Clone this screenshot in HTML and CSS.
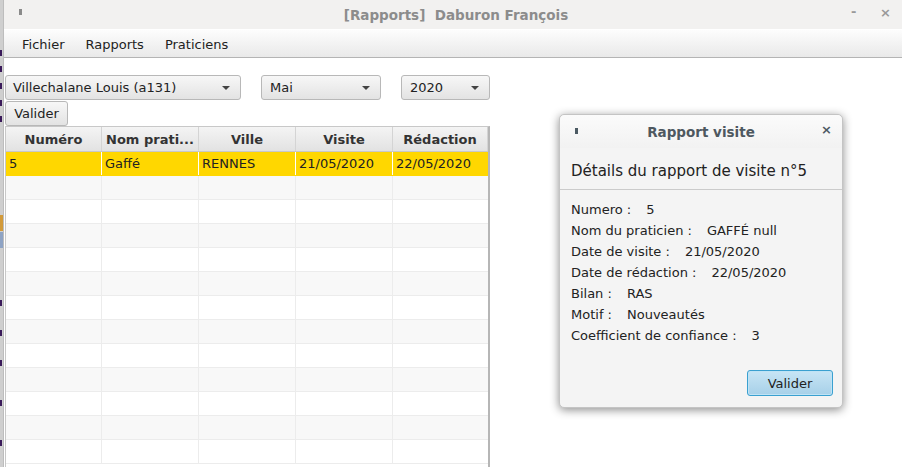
FILE: index.html
```html
<!DOCTYPE html>
<html lang="fr">
<head>
<meta charset="utf-8">
<title>[Rapports] Daburon François</title>
<link rel="stylesheet" href="styles.css">
</head>
<body>
<div class="screen">
  <div class="edge">
    <span class="mark m1"></span><span class="mark m2"></span><span class="mark m3"></span>
    <span class="mark m4"></span><span class="mark m5"></span><span class="mark m6"></span>
    <span class="mark m7"></span><span class="mark m8"></span><span class="mark m9"></span>
    <span class="mark m10"></span><span class="mark m11"></span><span class="mark m12"></span>
  </div>
  <div class="window">
    <div class="titlebar">
      <span class="win-icon"></span>
      <span class="win-title">[Rapports]&nbsp;&nbsp;Daburon François</span>
      <span class="win-min">-</span>
      <span class="win-close">×</span>
    </div>
    <div class="menubar">
      <span class="menu">Fichier</span>
      <span class="menu">Rapports</span>
      <span class="menu">Praticiens</span>
    </div>
    <div class="content">
      <div class="filters">
        <div class="combo c1"><span>Villechalane Louis (a131)</span><i class="arrow"></i></div>
        <div class="combo c2"><span>Mai</span><i class="arrow"></i></div>
        <div class="combo c3"><span>2020</span><i class="arrow"></i></div>
      </div>
      <div class="btn">Valider</div>
      <div class="table">
        <div class="row head">
          <div class="cell">Numéro</div><div class="cell">Nom prati...</div><div class="cell">Ville</div><div class="cell">Visite</div><div class="cell">Rédaction</div>
        </div>
        <div class="row sel">
          <div class="cell">5</div><div class="cell">Gaffé</div><div class="cell">RENNES</div><div class="cell">21/05/2020</div><div class="cell">22/05/2020</div>
        </div>
        <div class="row odd"><div class="cell"></div><div class="cell"></div><div class="cell"></div><div class="cell"></div><div class="cell"></div></div>
        <div class="row"><div class="cell"></div><div class="cell"></div><div class="cell"></div><div class="cell"></div><div class="cell"></div></div>
        <div class="row odd"><div class="cell"></div><div class="cell"></div><div class="cell"></div><div class="cell"></div><div class="cell"></div></div>
        <div class="row"><div class="cell"></div><div class="cell"></div><div class="cell"></div><div class="cell"></div><div class="cell"></div></div>
        <div class="row odd"><div class="cell"></div><div class="cell"></div><div class="cell"></div><div class="cell"></div><div class="cell"></div></div>
        <div class="row"><div class="cell"></div><div class="cell"></div><div class="cell"></div><div class="cell"></div><div class="cell"></div></div>
        <div class="row odd"><div class="cell"></div><div class="cell"></div><div class="cell"></div><div class="cell"></div><div class="cell"></div></div>
        <div class="row"><div class="cell"></div><div class="cell"></div><div class="cell"></div><div class="cell"></div><div class="cell"></div></div>
        <div class="row odd"><div class="cell"></div><div class="cell"></div><div class="cell"></div><div class="cell"></div><div class="cell"></div></div>
        <div class="row"><div class="cell"></div><div class="cell"></div><div class="cell"></div><div class="cell"></div><div class="cell"></div></div>
        <div class="row odd"><div class="cell"></div><div class="cell"></div><div class="cell"></div><div class="cell"></div><div class="cell"></div></div>
        <div class="row"><div class="cell"></div><div class="cell"></div><div class="cell"></div><div class="cell"></div><div class="cell"></div></div>
      </div>
    </div>
  </div>

  <div class="dialog">
    <div class="dlg-title">
      <span class="dlg-icon"></span>
      <span class="dlg-name">Rapport visite</span>
      <span class="dlg-close">×</span>
    </div>
    <div class="dlg-header">Détails du rapport de visite n°5</div>
    <div class="dlg-body">
      <div class="field"><span class="lbl">Numero :</span><span class="val">5</span></div>
      <div class="field"><span class="lbl">Nom du praticien :</span><span class="val">GAFFÉ null</span></div>
      <div class="field"><span class="lbl">Date de visite :</span><span class="val">21/05/2020</span></div>
      <div class="field"><span class="lbl">Date de rédaction :</span><span class="val">22/05/2020</span></div>
      <div class="field"><span class="lbl">Bilan :</span><span class="val">RAS</span></div>
      <div class="field"><span class="lbl">Motif :</span><span class="val">Nouveautés</span></div>
      <div class="field"><span class="lbl">Coefficient de confiance :</span><span class="val">3</span></div>
    </div>
    <div class="dlg-footer">
      <div class="btn-default">Valider</div>
    </div>
  </div>
</div>
</body>
</html>
```
FILE: styles.css
```css
* { box-sizing: border-box; }
html, body {
  margin: 0;
  padding: 0;
  width: 902px;
  height: 467px;
  overflow: hidden;
  background: #ffffff;
  font-family: "DejaVu Sans", "Liberation Sans", sans-serif;
  font-size: 13px;
  color: #222;
}
.screen {
  position: relative;
  display: flex;
  width: 902px;
  height: 467px;
}
.edge {
  position: relative;
  width: 4px;
  flex: none;
  background: #cfcfcf;
  border-right: 1px solid #bdbdbd;
}
.mark {
  position: absolute;
  left: 0;
  width: 2px;
  height: 6px;
  background: #3a1a5a;
}
.m1 { top: 50px; } .m2 { top: 66px; } .m3 { top: 83px; } .m4 { top: 100px; }
.m5 { top: 116px; } .m6 { top: 255px; } .m7 { top: 275px; } .m8 { top: 300px; }
.m9 { top: 330px; } .m10 { top: 360px; } .m11 { top: 400px; } .m12 { top: 440px; }
.m6 { background: #d29a3a; height: 16px; top: 215px; width: 3px; }
.m7 { background: #8ea3c4; top: 232px; height: 16px; width: 3px; }

.window {
  flex: 1;
  display: flex;
  flex-direction: column;
  min-width: 0;
}
.titlebar {
  position: relative;
  height: 29px;
  flex: none;
  background: #f2f1f0;
  display: flex;
  align-items: center;
  justify-content: center;
}
.win-icon {
  position: absolute;
  left: 15px;
  top: 9px;
  width: 3px;
  height: 6px;
  background: #8a8a8a;
}
.win-title {
  font-weight: bold;
  font-size: 13.5px;
  color: #8c8c8c;
  margin-left: 6px;
}
.win-min, .win-close {
  position: absolute;
  top: 5px;
  font-size: 13px;
  color: #999;
  font-weight: bold;
}
.win-min { left: 847px; top: 4px; }
.win-close { left: 876px; }

.menubar {
  height: 29px;
  flex: none;
  display: flex;
  align-items: center;
  padding-left: 18px;
  padding-top: 1px;
  gap: 21px;
  background: linear-gradient(#fdfdfd, #e9e9e9);
  border-top: 1px solid #ffffff;
  border-bottom: 1px solid #b4b4b4;
}
.menu { color: #222; font-size: 13px; }

.content {
  flex: 1;
  padding: 17px 0 0 1px;
  display: flex;
  flex-direction: column;
}
.filters {
  display: flex;
  gap: 20px;
}
.combo {
  height: 25px;
  border: 1px solid #b8b8b8;
  border-radius: 3px;
  background: linear-gradient(#f7f7f7, #e3e3e3);
  display: flex;
  align-items: center;
  justify-content: space-between;
  padding: 0 10px 0 7px;
  color: #222;
}
.c1 { width: 236px; }
.c2 { width: 120px; padding-left: 8px; }
.c3 { width: 89px; padding-left: 8px; }
.arrow {
  width: 0;
  height: 0;
  border-left: 4px solid transparent;
  border-right: 4px solid transparent;
  border-top: 4px solid #444;
}
.btn {
  align-self: flex-start;
  width: 63px;
  height: 25px;
  margin-top: 1px;
  border: 1px solid #b8b8b8;
  border-radius: 3px;
  background: linear-gradient(#f7f7f7, #e3e3e3);
  display: flex;
  align-items: center;
  justify-content: center;
}

.table {
  width: 485px;
  flex: 1;
  border-left: 1px solid #c8c8c8;
  border-right: 2px solid #b6b6b6;
  border-top: 1px solid #c8c8c8;
  overflow: hidden;
}
.row {
  display: grid;
  grid-template-columns: 96px 97px 97px 97px 1fr;
  height: 24px;
  background: #fff;
  border-bottom: 1px solid #ececec;
}
.row.odd { background: #f8f8f8; }
.cell {
  border-right: 1px solid #ececec;
  display: flex;
  align-items: center;
  padding-left: 3px;
  white-space: nowrap;
  overflow: hidden;
}
.cell:last-child { border-right: none; }
.row.head {
  height: 25px;
  background: linear-gradient(#f4f4f4, #e2e2e2);
  border-bottom: 1px solid #c8c8c8;
}
.row.head .cell {
  justify-content: center;
  padding-left: 0;
  font-weight: bold;
  color: #333;
  border-right: 1px solid #d4d4d4;
}
.row.sel {
  background: #ffd700;
  border-bottom: 1px solid #ffd700;
}
.row.sel .cell { border-right: 1px solid #ffffff; color: #222; }
.row.sel .cell:last-child { border-right: none; }

.dialog {
  position: absolute;
  left: 559px;
  top: 114px;
  width: 284px;
  height: 294px;
  background: #f4f4f4;
  border: 1px solid #c4c4c4;
  border-radius: 5px;
  box-shadow: 0 2px 10px rgba(0, 0, 0, 0.45);
  display: flex;
  flex-direction: column;
}
.dlg-title {
  position: relative;
  height: 33px;
  flex: none;
  display: flex;
  align-items: center;
  justify-content: center;
  background: linear-gradient(#fbfbfb, #f2f2f2);
  border-radius: 5px 5px 0 0;
}
.dlg-icon {
  position: absolute;
  left: 15px;
  top: 13px;
  width: 3px;
  height: 6px;
  background: #4c5a63;
}
.dlg-name {
  font-weight: bold;
  font-size: 13.5px;
  color: #4e5860;
  padding-top: 1px;
}
.dlg-close {
  position: absolute;
  left: 261px;
  top: 7px;
  font-size: 13px;
  font-weight: bold;
  color: #4c5a63;
}
.dlg-header {
  height: 42px;
  flex: none;
  padding: 14px 0 0 11px;
  font-size: 15px;
  color: #222;
  border-bottom: 1px solid #cbcbcb;
}
.dlg-body {
  padding: 9px 0 0 11px;
  display: flex;
  flex-direction: column;
}
.field {
  height: 21px;
  display: flex;
  align-items: center;
  color: #222;
}
.val { margin-left: 15px; }
.dlg-footer {
  flex: 1;
  display: flex;
  justify-content: flex-end;
  align-items: flex-end;
  padding: 0 9px 11px 0;
}
.btn-default {
  width: 86px;
  height: 26px;
  border: 1px solid #3aa0d0;
  border-radius: 3px;
  background: linear-gradient(#c7e5f5, #a7d0e8);
  box-shadow: inset 0 0 0 1px #bfe3f5;
  display: flex;
  align-items: center;
  justify-content: center;
  color: #222;
}
```
